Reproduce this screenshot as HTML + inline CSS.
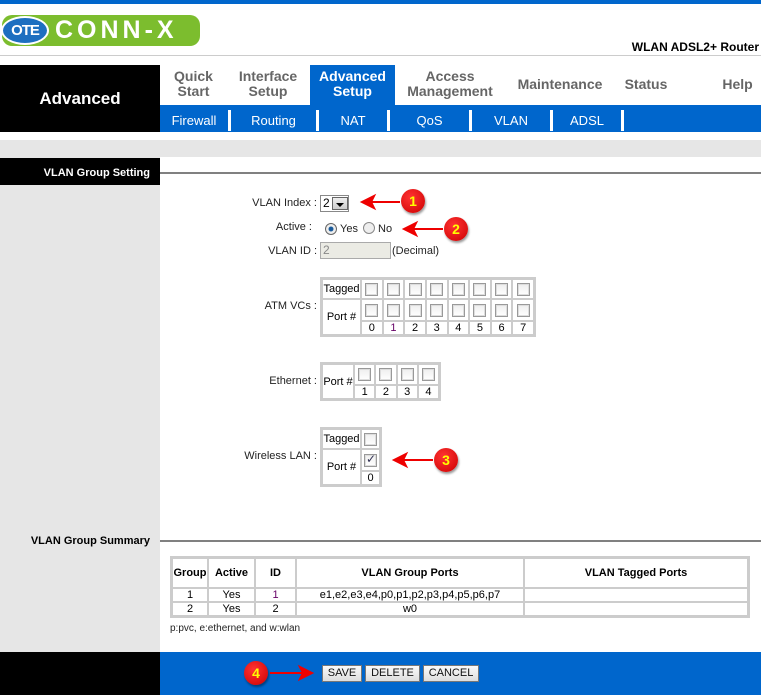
<!DOCTYPE html>
<html><head><style>
*{margin:0;padding:0;box-sizing:border-box}
body{width:761px;height:695px;position:relative;background:#fff;font-family:"Liberation Sans",Arial,sans-serif;font-size:11px;color:#000;overflow:hidden}
.a{position:absolute}
.tab{position:absolute;top:69px;color:#666;font-weight:bold;font-size:14px;text-align:center;line-height:15px}
.sub{position:absolute;top:110px;height:21px;color:#fff;font-size:13px;text-align:center;line-height:21px}
.sep{position:absolute;top:110px;width:3px;height:21px;background:#fff}
table{border-collapse:separate;border-spacing:0}
.g{position:absolute;border:2px solid #ccc;background:#fff}
.g td{border:1px solid #ccc;text-align:center;font-size:11px;padding:0}
.cb{display:inline-block;width:13px;height:13px;border:1px solid #999;background:linear-gradient(#eee,#fff);box-shadow:inset 0 0 0 1px #ddd;vertical-align:middle}
.lbl{position:absolute;font-size:11px;color:#222;text-align:right}
.mk{position:absolute;width:24px;height:24px;border-radius:50%;background:radial-gradient(circle at 40% 35%,#f33,#c00);color:#ff0;font-weight:bold;font-size:14px;text-align:center;line-height:24px;box-shadow:1px 2px 2px rgba(0,0,0,.4)}
.btn{position:absolute;top:665px;height:17px;border:1px solid #777;background:linear-gradient(#fafafa,#ddd);font-size:11px;text-align:center;line-height:15px;color:#111}
.st td{border:1px solid #ccc;text-align:center;font-size:11px;padding:0}
</style></head><body>
<div class="a" style="left:0;top:0;width:761px;height:4px;background:#0066cc"></div>
<!-- logo -->
<div class="a" style="left:2px;top:15px;width:198px;height:31px;border-radius:10px;background:#7cbd2e"></div>
<div class="a" style="left:1px;top:16px;width:48px;height:29px;border-radius:50%;background:#1d6fc0;border:2px solid #fff;color:#fff;font-weight:bold;font-size:15px;text-align:center;line-height:25px;letter-spacing:-1px">OTE</div>
<div class="a" style="left:55px;top:15px;color:#fff;font-size:25px;font-weight:bold;letter-spacing:4px;line-height:30px">CONN-X</div>
<div class="a" style="right:2px;top:40px;font-weight:bold;font-size:12px">WLAN ADSL2+ Router</div>
<div class="a" style="left:0;top:55px;width:761px;height:1px;background:#ccc"></div>
<!-- nav -->
<div class="a" style="left:0;top:65px;width:160px;height:67px;background:#000;color:#fff;font-weight:bold;font-size:17px;text-align:center;line-height:67px">Advanced</div>
<div class="a" style="left:160px;top:105px;width:601px;height:27px;background:#0066cc"></div>
<div class="a" style="left:310px;top:65px;width:85px;height:45px;background:#0066cc"></div>
<div class="tab" style="left:160px;width:67px">Quick<br>Start</div>
<div class="tab" style="left:230px;width:76px">Interface<br>Setup</div>
<div class="tab" style="left:310px;width:85px;color:#fff">Advanced<br>Setup</div>
<div class="tab" style="left:400px;width:100px">Access<br>Management</div>
<div class="tab" style="left:515px;top:77px;width:90px">Maintenance</div>
<div class="tab" style="left:617px;top:77px;width:58px">Status</div>
<div class="tab" style="left:715px;top:77px;width:45px">Help</div>
<div class="sub" style="left:160px;width:68px">Firewall</div>
<div class="sep" style="left:228px"></div>
<div class="sub" style="left:231px;width:85px">Routing</div>
<div class="sep" style="left:316px"></div>
<div class="sub" style="left:319px;width:68px">NAT</div>
<div class="sep" style="left:387px"></div>
<div class="sub" style="left:390px;width:79px">QoS</div>
<div class="sep" style="left:469px"></div>
<div class="sub" style="left:472px;width:78px">VLAN</div>
<div class="sep" style="left:550px"></div>
<div class="sub" style="left:553px;width:68px">ADSL</div>
<div class="sep" style="left:621px"></div>
<!-- band -->
<div class="a" style="left:0;top:140px;width:761px;height:17px;background:#e6e6e6"></div>
<div class="a" style="left:0;top:157px;width:160px;height:495px;background:#e6e6e6"></div>
<div class="a" style="left:0;top:158px;width:160px;height:27px;background:#000;color:#fff;font-weight:bold;font-size:11px;text-align:right;padding-right:10px;line-height:30px">VLAN Group Setting</div>
<div class="a" style="left:160px;top:172px;width:601px;height:2px;background:#808080"></div>
<!-- form -->
<div class="lbl" style="left:200px;width:117px;top:197px">VLAN Index :</div>
<div class="a" style="left:320px;top:195px;width:29px;height:17px;border:1px solid #888;background:#fff;font-size:12px;padding-left:2px;line-height:15px">2</div>
<div class="a" style="left:332px;top:197px;width:16px;height:13px;background:linear-gradient(#eee,#ccc);border:1px solid #666"><div style="margin:5px auto 0;width:0;height:0;border-left:4px solid transparent;border-right:4px solid transparent;border-top:4px solid #000"></div></div>
<div class="lbl" style="left:200px;width:112px;top:221px">Active :</div>
<div class="a" style="left:325px;top:223px;width:12px;height:12px;border-radius:50%;border:1px solid #666;background:radial-gradient(circle,#1a5a9a 30%,#eee 40%)"></div>
<div class="a" style="left:340px;top:223px;font-size:11px;color:#222">Yes</div>
<div class="a" style="left:363px;top:222px;width:12px;height:12px;border-radius:50%;border:1px solid #888;background:#eee"></div>
<div class="a" style="left:378px;top:223px;font-size:11px;color:#222">No</div>
<div class="lbl" style="left:200px;width:117px;top:245px">VLAN ID :</div>
<div class="a" style="left:320px;top:242px;width:71px;height:17px;border:1px solid #aaa;background:#ebebe4;color:#888;font-size:12px;padding-left:2px;line-height:15px">2</div>
<div class="a" style="left:392px;top:245px;font-size:11px;color:#222">(Decimal)</div>

<div class="lbl" style="left:200px;width:117px;top:300px">ATM VCs :</div>
<table class="g" style="left:320px;top:277px;width:216px;height:58px">
<tr style="height:20px"><td style="width:39px">Tagged</td><td><span class="cb"></span></td><td><span class="cb"></span></td><td><span class="cb"></span></td><td><span class="cb"></span></td><td><span class="cb"></span></td><td><span class="cb"></span></td><td><span class="cb"></span></td><td><span class="cb"></span></td></tr>
<tr style="height:22px"><td rowspan="2">Port #</td><td><span class="cb"></span></td><td><span class="cb"></span></td><td><span class="cb"></span></td><td><span class="cb"></span></td><td><span class="cb"></span></td><td><span class="cb"></span></td><td><span class="cb"></span></td><td><span class="cb"></span></td></tr>
<tr style="height:13px"><td>0</td><td style="color:#606">1</td><td>2</td><td>3</td><td>4</td><td>5</td><td>6</td><td>7</td></tr>
</table>

<div class="lbl" style="left:200px;width:117px;top:375px">Ethernet :</div>
<table class="g" style="left:320px;top:362px;width:121px;height:36px">
<tr style="height:21px"><td rowspan="2" style="width:32px">Port #</td><td><span class="cb"></span></td><td><span class="cb"></span></td><td><span class="cb"></span></td><td><span class="cb"></span></td></tr>
<tr style="height:13px"><td>1</td><td>2</td><td>3</td><td>4</td></tr>
</table>

<div class="lbl" style="left:200px;width:117px;top:450px">Wireless LAN :</div>
<table class="g" style="left:320px;top:427px;width:62px;height:58px">
<tr style="height:20px"><td style="width:39px">Tagged</td><td><span class="cb"></span></td></tr>
<tr style="height:22px"><td rowspan="2">Port #</td><td><span class="cb" style="position:relative"><span style="position:absolute;left:1px;top:-3px;color:#335;font-size:12px">&#10003;</span></span></td></tr>
<tr style="height:13px"><td>0</td></tr>
</table>

<!-- summary -->
<div class="a" style="left:0;top:535px;width:160px;color:#000;font-weight:bold;font-size:11px;text-align:right;padding-right:10px">VLAN Group Summary</div>
<div class="a" style="left:160px;top:540px;width:601px;height:2px;background:#808080"></div>
<table class="g st" style="left:170px;top:556px;width:580px;height:60px">
<tr style="height:30px;font-weight:bold"><td style="width:36px;font-weight:bold">Group</td><td style="width:47px;font-weight:bold">Active</td><td style="width:41px;font-weight:bold">ID</td><td style="width:228px;font-weight:bold">VLAN Group Ports</td><td style="font-weight:bold">VLAN Tagged Ports</td></tr>
<tr style="height:14px"><td>1</td><td>Yes</td><td style="color:#606">1</td><td>e1,e2,e3,e4,p0,p1,p2,p3,p4,p5,p6,p7</td><td></td></tr>
<tr style="height:14px"><td>2</td><td>Yes</td><td>2</td><td>w0</td><td></td></tr>
</table>
<div class="a" style="left:170px;top:623px;font-size:10px;color:#222">p:pvc, e:ethernet, and w:wlan</div>

<!-- footer -->
<div class="a" style="left:0;top:652px;width:160px;height:43px;background:#000"></div>
<div class="a" style="left:160px;top:652px;width:601px;height:43px;background:#0066cc"></div>
<div class="btn" style="left:322px;width:40px">SAVE</div>
<div class="btn" style="left:365px;width:55px">DELETE</div>
<div class="btn" style="left:423px;width:56px">CANCEL</div>

<!-- markers -->
<svg class="a" style="left:0;top:0" width="761" height="695">
<g stroke="#e00" stroke-width="2" fill="#e00">
<line x1="400" y1="202" x2="370" y2="202"/><polygon points="362,202 374,196 371,202 374,208"/>
<line x1="443" y1="229" x2="412" y2="229"/><polygon points="404,229 416,223 413,229 416,235"/>
<line x1="433" y1="460" x2="403" y2="460"/><polygon points="394,460 406,454 403,460 406,466"/>
<line x1="270" y1="673" x2="303" y2="673"/><polygon points="312,673 300,667 303,673 300,679"/>
</g></svg>
<div class="mk" style="left:401px;top:189px">1</div>
<div class="mk" style="left:444px;top:217px">2</div>
<div class="mk" style="left:434px;top:448px">3</div>
<div class="mk" style="left:244px;top:661px">4</div>
</body></html>
